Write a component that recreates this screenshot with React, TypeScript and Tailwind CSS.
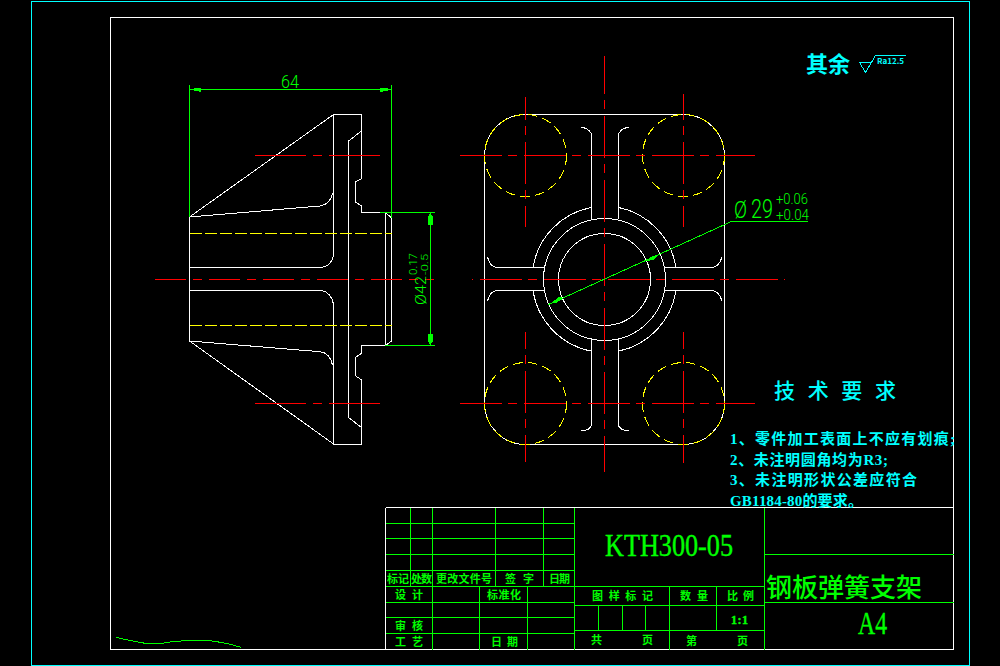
import React from 'react';

const CJK = "font-['Noto_Sans_CJK_SC',sans-serif]";

// dashed centre lines: d = path, o = dash offset
const redLines = [
  { d: 'M255 155.5H380', a: '51 7 9 7', o: 0 },
  { d: 'M255 403.5H380', a: '51 7 9 7', o: 0 },
  { d: 'M155 279.5H434', a: '31 7 9 7', o: 0 },
  { d: 'M460 155.5H755', o: 0 },
  { d: 'M460 403.5H755', o: 0 },
  { d: 'M472 279.5H785', o: 56 },
  { d: 'M604.5 56V472', o: 4 },
  { d: 'M525.5 97V227', o: 19 },
  { d: 'M683.5 94V227', o: 16 },
  { d: 'M525.5 332V462', o: 25 },
  { d: 'M683.5 332V463', o: 25 },
];

const whitePaths = [
  // left view outline
  'M189.5 217L333.5 114.5H361.5V178.7L355.5 182V202L361.5 206V212.5H385.5L391.5 218V341L385.5 345.5H361.5V353.3L355.5 357.5V375.7L361.5 380V444H333.5L189.5 341V217Z',
  'M333.5 114.5V255Q331 267.3 320 267.3H189.5',
  'M189.5 290.5H321Q331 292 333.5 304V444',
  'M189.5 217L320 206Q331 204 332.5 193',
  'M189.5 341L320 351.7Q330 353 332.5 365',
  'M361.5 131L348.5 141V417.5L361.5 427.5',
  'M385.5 212.5V345.5',
  // right view ribs
  'M581 127Q591.7 129 591.7 136.7V219.3',
  'M629 127Q618.3 129 618.3 136.7V219.3',
  'M591.7 338.3V423Q591.7 430.7 581 430.7',
  'M618.3 338.3V423Q618.3 430.7 629 430.7',
  'M487.5 257Q490 267.5 498 267.5H545',
  'M487.5 301Q490 290.5 498 290.5H545',
  'M722 257Q719 267.5 711 267.5H664',
  'M722 301Q719 290.5 711 290.5H664',
  // outer hub arcs
  'M533 267.5A73 73 0 0 1 591.7 207.4',
  'M618.3 207.4A73 73 0 0 1 676 267.5',
  'M676 290.5A73 73 0 0 1 618.3 351.2',
  'M591.7 351.2A73 73 0 0 1 533 290.5',
];

const gridLines = [
  'M385.5 523.5H574.5', 'M385.5 538.5H574.5', 'M385.5 554.5H574.5', 'M385.5 570.5H574.5',
  'M385.5 586.5H764.5', 'M385.5 602.5H574.5', 'M385.5 617.5H574.5', 'M385.5 633.5H574.5',
  'M410.5 507.5V586.5', 'M432.5 507.5V649.5', 'M495.5 507.5V586.5', 'M543.5 507.5V586.5',
  'M574.5 507.5V649.5', 'M479.5 586.5V649.5', 'M527.5 586.5V649.5',
  'M574.5 605.5H764.5', 'M574.5 630.5H764.5',
  'M598.5 605.5V630.5', 'M622.5 605.5V630.5', 'M645.5 605.5V630.5',
  'M669.5 586.5V649.5', 'M716.5 586.5V630.5', 'M764.5 507.5V649.5',
  'M764.5 554.5H953.5', 'M764.5 602.5H953.5',
];

const small = [
  { t: '标记', x: 387, y: 583, w: 22 },
  { t: '处数', x: 411, y: 583, w: 21 },
  { t: '更改文件号', x: 436, y: 583, w: 56 },
  { t: '签 字', x: 505, y: 583, w: 29 },
  { t: '日期', x: 549, y: 583, w: 21 },
  { t: '设 计', x: 395, y: 599, w: 28 },
  { t: '标准化', x: 487, y: 599, w: 34 },
  { t: '审 核', x: 395, y: 630, w: 28 },
  { t: '工 艺', x: 395, y: 646, w: 28 },
  { t: '日 期', x: 491, y: 646, w: 27 },
  { t: '图样标记', x: 592, y: 600, w: 61 },
  { t: '数 量', x: 680, y: 600, w: 28 },
  { t: '比 例', x: 727, y: 600, w: 27 },
  { t: '共', x: 591, y: 644, w: 12 },
  { t: '页', x: 642, y: 644, w: 11 },
  { t: '第', x: 686, y: 645, w: 11 },
  { t: '页', x: 737, y: 645, w: 10 },
];

const notes = [
  { t: '1、零件加工表面上不应有划痕;', y: 444, w: 225 },
  { t: '2、未注明圆角均为R3;', y: 465, w: 158 },
  { t: '3、未注明形状公差应符合', y: 485, w: 187 },
  { t: 'GB1184-80的要求。', y: 506, w: 133 },
];

export default function App() {
  return (
    <div className="w-[1000px] h-[666px] bg-black overflow-hidden">
      <svg viewBox="0 0 1000 666" className="block w-[1000px] h-[666px]" fill="none" shapeRendering="crispEdges">
        {/* frames */}
        <rect x="31.5" y="1.5" width="938" height="664" className="stroke-[#00ffff]" />
        <rect x="110.5" y="17.5" width="843" height="632" className="stroke-white" />

        {/* part outlines */}
        <g className="stroke-white">
          {whitePaths.map((d) => (
            <path key={d} d={d} />
          ))}
          <rect x="484.5" y="114.5" width="240" height="330" rx="41" />
          <circle cx="604.5" cy="279.5" r="46" />
          <circle cx="604.5" cy="279.5" r="61" />
        </g>

        {/* hidden lines */}
        <g className="stroke-[#ffff00]" strokeDasharray="12 3">
          <path d="M189.5 233.5H391.5" />
          <path d="M189.5 325.5H391.5" />
          <circle cx="525.5" cy="155.5" r="41" strokeDasharray="10 5" />
          <circle cx="683.5" cy="155.5" r="41" strokeDasharray="10 5" />
          <circle cx="525.5" cy="403.5" r="41" strokeDasharray="10 5" />
          <circle cx="683.5" cy="403.5" r="41" strokeDasharray="10 5" />
        </g>

        {/* centre lines */}
        <g className="stroke-[#ff0000]">
          {redLines.map((l) => (
            <path key={l.d} d={l.d} strokeDasharray={l.a ?? '42 6 9 7'} strokeDashoffset={l.o} />
          ))}
        </g>

        {/* dimensions */}
        <g className="stroke-[#00ff00]">
          <path d="M189.5 85V217" />
          <path d="M391.5 85V218" />
          <path d="M189.5 89.5H391.5" />
          <path d="M380 212.5H435" />
          <path d="M385 345.5H435" />
          <path d="M430.5 212.5V345.5" />
          <path d="M548.5 304.5L731.5 221.5H808" />
          <path d="M116 637.3L123 639L133 641L145 643.3H162.7L171.7 641.7L185 640.7H210L223 642.7L233 645L240.7 647.3" />
        </g>
        <g className="fill-[#00ff00]">
          <polygon points="191,89 196,88 201,88 201,92 196,91 191,90" />
          <polygon points="390,89 385,88 380,88 380,92 385,91 390,90" />
          <polygon points="430,213 429,216 428,216 428,225 433,225 433,216 432,216 431,213" />
          <polygon points="430,345 429,342 428,342 428,334 433,334 433,342 432,342 431,345" />
          <polygon points="551,303 559,297 564,298 556,303" />
          <polygon points="658,255 650,257 646,261 654,260" />
        </g>

        {/* surface finish mark */}
        <path d="M859.5 62.5H871.5L865.5 72.5L859.5 62.5M865.5 72.5L875.5 55.5H906" className="stroke-[#00ffff]" />

        {/* title block */}
        <g className="stroke-[#00ff00]">
          {gridLines.map((d) => (
            <path key={d} d={d} />
          ))}
        </g>
        <path d="M385.5 507.5H953.5M385.5 507.5V649.5" className="stroke-white" />

        {/* thin dimension text */}
        <g className="fill-[#00ff00] font-['Roboto',sans-serif] font-light" shapeRendering="auto">
          <text x="281" y="88" fontSize="18" textLength="18" lengthAdjust="spacingAndGlyphs">64</text>
          <text x="734" y="218" fontSize="24" textLength="13" lengthAdjust="spacingAndGlyphs">Ø</text>
          <text x="751" y="218" fontSize="25" textLength="22" lengthAdjust="spacingAndGlyphs">29</text>
          <text x="776" y="204" fontSize="14" textLength="32" lengthAdjust="spacingAndGlyphs">+0.06</text>
          <text x="776" y="220" fontSize="14" textLength="33" lengthAdjust="spacingAndGlyphs">+0.04</text>
          <text transform="translate(426 305) rotate(-90)" fontSize="15" textLength="29" lengthAdjust="spacingAndGlyphs">Ø42</text>
          <text transform="translate(417 275) rotate(-90)" fontSize="10" textLength="22" lengthAdjust="spacingAndGlyphs">0.17</text>
          <text transform="translate(428 275) rotate(-90)" fontSize="9" textLength="21" lengthAdjust="spacingAndGlyphs">-0.5</text>
        </g>

        {/* cyan notes */}
        <g className={`fill-[#00ffff] ${CJK}`}>
          <text x="806" y="72" fontSize="22" fontWeight="700" textLength="44">其余</text>
          <text x="877" y="64" fontSize="8" fontWeight="700" textLength="27" lengthAdjust="spacingAndGlyphs">Ra12.5</text>
          <text x="774" y="398" fontSize="21" fontWeight="500" textLength="122">技 术 要 求</text>
        </g>
        <g className="fill-[#00ffff] font-['Liberation_Serif','Noto_Sans_CJK_SC',serif] font-bold">
          {notes.map((n) => (
            <text key={n.t} x="730" y={n.y} fontSize="15" textLength={n.w}>
              {n.t}
            </text>
          ))}
        </g>

        {/* title block text */}
        <g className={`fill-[#00ff00] ${CJK}`}>
          {small.map((s) => (
            <text key={s.t + s.x} x={s.x} y={s.y} fontSize="11" fontWeight="700" textLength={s.w}>
              {s.t}
            </text>
          ))}
          <text x="766" y="597" fontSize="26" fontWeight="500" textLength="156">钢板弹簧支架</text>
        </g>
        <g className="fill-[#00ff00] stroke-[#00ff00] stroke-[0.4] font-['Liberation_Serif',serif]" shapeRendering="auto">
          <text x="605" y="556" fontSize="32" textLength="128" lengthAdjust="spacingAndGlyphs">KTH300-05</text>
          <text x="858" y="634" fontSize="32" textLength="29" lengthAdjust="spacingAndGlyphs">A4</text>
          <text x="731" y="624" fontSize="12" fontWeight="700" textLength="17">1:1</text>
        </g>
      </svg>
    </div>
  );
}
